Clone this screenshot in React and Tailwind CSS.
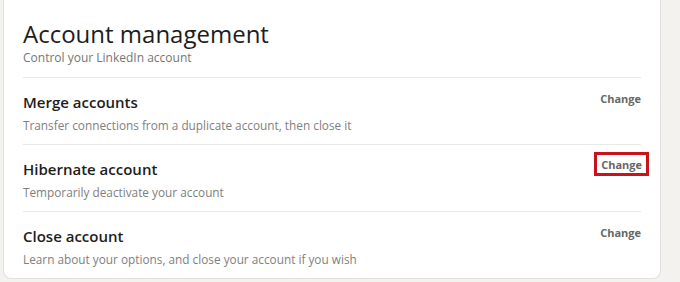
import React from "react";

const rows = [
  {
    title: "Merge accounts",
    text: "Transfer connections from a duplicate account, then close it",
  },
  {
    title: "Hibernate account",
    text: "Temporarily deactivate your account",
    marked: true,
  },
  {
    title: "Close account",
    text: "Learn about your options, and close your account if you wish",
  },
];

export default function App() {
  return (
    <div
      className="w-[680px] h-[282px] overflow-hidden bg-[#f3f2ef]"
      style={{ fontFamily: '"Open Sans", "Noto Sans", sans-serif' }}
    >
      <div className="ml-[3px] w-[658px] -mt-2 pt-2 bg-white border border-t-0 border-[#e0dfdc] rounded-b-lg">
        {/* Header */}
        <div className="pl-[19px] pr-[19px] pt-[18px]">
          <h1 className="text-[24px] leading-[32px] text-[#1d1d1d] font-normal">
            Account management
          </h1>
          <p className="text-[12px] leading-[16px] text-[#767676]">
            Control your LinkedIn account
          </p>
        </div>

        <div className="mx-[19px] mt-[11px]">
          {rows.map((row) => (
            <div
              key={row.title}
              className="flex justify-between border-t border-[#e8e8e8] h-[67px] pt-[14px]"
            >
              <div>
                <div className="text-[15px] leading-[20px] font-semibold text-[#1d1d1d]">
                  {row.title}
                </div>
                <div className="text-[11.8px] leading-[16px] text-[#808080] mt-[5px]">
                  {row.text}
                </div>
              </div>
              <div
                className={
                  row.marked
                    ? "self-start -mt-[7px] mr-[-8px] px-[4px] py-[1px] border-[3px] border-[#c8121c] leading-[14px]"
                    : "self-start -mt-[2px] leading-[14px]"
                }
              >
                <span className="text-[11px] font-bold text-[#666666]">
                  Change
                </span>
              </div>
            </div>
          ))}
        </div>
      </div>
    </div>
  );
}
